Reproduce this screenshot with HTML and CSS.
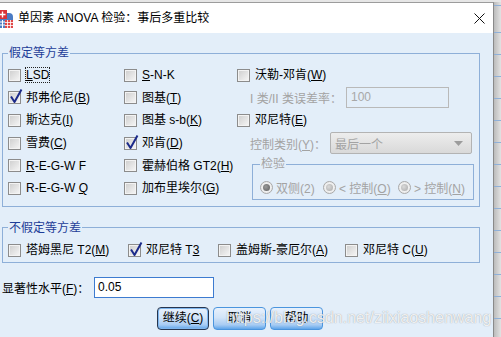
FILE: index.html
```html
<!DOCTYPE html>
<html lang="zh-CN">
<head>
    <meta charset="UTF-8">
    <title>单因素 ANOVA 检验：事后多重比较</title>
    <link rel="stylesheet" href="styles.css">
</head>
<body>
<div class="screen">
    <div class="dialog">
        <div class="titlebar">
            <svg class="appIcon" viewBox="0 0 14 20">
                <rect x="-4" y="5" width="17" height="16" rx="4" fill="#4c7cc4"/>
                <path d="M0 14h5M0 17h5M2.5 12v9" stroke="#fff" stroke-width="1"/>
                <rect x="5" y="12" width="8" height="8" fill="#e04848"/>
                <path d="M5 14.5h8M5 17.5h8M7.5 12v8M10.5 12v8" stroke="#fff" stroke-width="0.8"/>
                <rect x="-2" y="2" width="9" height="9" fill="#d9343a"/>
                <path d="M2.5 3.5v6M-0.5 6.5h6" stroke="#fff" stroke-width="1.4"/>
            </svg>
            <span class="title">单因素 ANOVA 检验：事后多重比较</span>
            <svg class="closeIcon" viewBox="0 0 11 11">
                <path d="M0.5 0.5L10.5 10.5M10.5 0.5L0.5 10.5" stroke="#111" stroke-width="1"/>
            </svg>
        </div>

        <div class="content">
            <fieldset class="group equalGroup">
                <legend>假定等方差</legend>
                <div class="cols">
                    <div class="col col1">
                        <div class="row"><label class="check"><span class="box"></span><span class="focusText"><u>L</u>SD</span></label></div>
                        <div class="row"><label class="check"><span class="box"><svg viewBox="0 0 15 16"><path d="M3 8.5L6.5 14L13.5 1.5"/></svg></span><span>邦弗伦尼(<u>B</u>)</span></label></div>
                        <div class="row"><label class="check"><span class="box"></span><span>斯达克(<u>I</u>)</span></label></div>
                        <div class="row"><label class="check"><span class="box"></span><span>雪费(<u>C</u>)</span></label></div>
                        <div class="row"><label class="check"><span class="box"></span><span><u>R</u>-E-G-W F</span></label></div>
                        <div class="row"><label class="check"><span class="box"></span><span>R-E-G-W <u>Q</u></span></label></div>
                    </div>
                    <div class="col col2">
                        <div class="row"><label class="check"><span class="box"></span><span><u>S</u>-N-K</span></label></div>
                        <div class="row"><label class="check"><span class="box"></span><span>图基(<u>T</u>)</span></label></div>
                        <div class="row"><label class="check"><span class="box"></span><span>图基 s-b(<u>K</u>)</span></label></div>
                        <div class="row"><label class="check"><span class="box"><svg viewBox="0 0 15 16"><path d="M3 8.5L6.5 14L13.5 1.5"/></svg></span><span>邓肯(<u>D</u>)</span></label></div>
                        <div class="row"><label class="check"><span class="box"></span><span>霍赫伯格 GT2(<u>H</u>)</span></label></div>
                        <div class="row"><label class="check"><span class="box"></span><span>加布里埃尔(<u>G</u>)</span></label></div>
                    </div>
                    <div class="col col3">
                        <div class="row"><label class="check"><span class="box"></span><span>沃勒-邓肯(<u>W</u>)</span></label></div>
                        <div class="row field">
                            <span class="rateLabel">I 类/II 类误差率：</span>
                            <span class="inputDisabled">100</span>
                        </div>
                        <div class="row"><label class="check"><span class="box"></span><span>邓尼特(<u>E</u>)</span></label></div>
                        <div class="row field">
                            <span class="ctrlLabel">控制类别(<u>Y</u>)：</span>
                            <span class="selectDisabled"><span>最后一个</span><svg viewBox="0 0 9 5"><path d="M0 0h9L4.5 5z"/></svg></span>
                        </div>
                        <fieldset class="group testBox">
                            <legend>检验</legend>
                            <div class="radios">
                                <label class="radioItem r1"><span class="radio on"></span><span>双侧(2)</span></label>
                                <label class="radioItem r2"><span class="radio"></span><span>&lt; 控制(<u>O</u>)</span></label>
                                <label class="radioItem"><span class="radio"></span><span>&gt; 控制(<u>N</u>)</span></label>
                            </div>
                        </fieldset>
                    </div>
                </div>
            </fieldset>

            <fieldset class="group unequalGroup">
                <legend>不假定等方差</legend>
                <div class="row">
                    <label class="check u1"><span class="box"></span><span>塔姆黑尼 T2(<u>M</u>)</span></label>
                    <label class="check u2"><span class="box"><svg viewBox="0 0 15 16"><path d="M3 8.5L6.5 14L13.5 1.5"/></svg></span><span>邓尼特 T<u>3</u></span></label>
                    <label class="check u3"><span class="box"></span><span>盖姆斯-豪厄尔(<u>A</u>)</span></label>
                    <label class="check"><span class="box"></span><span>邓尼特 C(<u>U</u>)</span></label>
                </div>
            </fieldset>

            <div class="sigRow">
                <span class="sigLabel">显著性水平(<u>F</u>)：</span>
                <span class="sigInput">0.05</span>
            </div>

            <div class="buttons">
                <button class="btn btnDefault">继续(<u>C</u>)</button>
                <button class="btn">取消</button>
                <button class="btn">帮助</button>
            </div>
        </div>
    </div>
    <div class="strip"></div>

    <div class="watermark">https://blog.csdn.net/ziixiaoshenwang</div>
</div>
</body>
</html>
```

FILE: styles.css
```css
* {
    box-sizing: border-box;
}

body {
    margin: 0;
    background-color: #e6e6e6;
    color: #000000;
    font-family: "Liberation Sans", "Noto Sans CJK SC", sans-serif;
    font-size: 12px;
    overflow: hidden;
}

.screen {
    position: relative;
    display: flex;
    height: 337px;
    padding-top: 2px;
}

.dialog {
    width: 494px;
    flex: none;
    display: flex;
    flex-direction: column;
    background-color: #e3eef9;
    border-top: 1px solid #9c9c9c;
    border-right: 1px solid #8a8a8a;
}

.titlebar {
    height: 30px;
    display: flex;
    align-items: center;
    background-color: #ffffff;
}

.appIcon {
    width: 14px;
    height: 20px;
    margin-right: 4px;
}

.title {
    flex: 1;
    line-height: 14px;
}

.closeIcon {
    width: 11px;
    height: 11px;
    margin-right: 8px;
}

.content {
    padding: 13px 13px 0 2px;
}

/* group boxes */
.group {
    margin: 0;
    min-width: 0;
    border: 1px solid #8eafd8;
}

.group legend {
    padding: 0 1px;
    line-height: 14px;
    color: #1e3d98;
}

.equalGroup {
    padding: 4px 0 6px 5px;
}

.cols {
    display: flex;
}

.col1 {
    width: 116px;
}

.col2 {
    width: 113px;
}

.col3 {
    flex: 1;
}

.row {
    height: 22.6px;
    display: flex;
    align-items: center;
}

.check {
    display: flex;
    align-items: center;
    gap: 5px;
    white-space: nowrap;
    line-height: 14px;
}

.box {
    position: relative;
    flex: none;
    width: 13px;
    height: 13px;
    border: 1px solid #8c8c8c;
    background: linear-gradient(135deg, #cdcdcd, #f7f7f7);
    box-shadow: inset 0 0 0 1px #f3f3f3;
}

.box svg {
    position: absolute;
    left: -1px;
    top: -4px;
    width: 15px;
    height: 16px;
    overflow: visible;
}

.box svg path {
    fill: none;
    stroke: #1b2a8a;
    stroke-width: 2;
    stroke-linejoin: round;
}

.focusText {
    outline: 1px dotted #222222;
}

/* disabled fields on the right */
.field {
    padding-left: 13px;
    color: #a3a3a3;
    white-space: nowrap;
}

.rateLabel {
    width: 96px;
}

.ctrlLabel {
    width: 80px;
}

.inputDisabled {
    width: 103px;
    height: 21px;
    padding-left: 4px;
    line-height: 19px;
    border: 1px solid #b9b9b9;
    color: #a8a8a8;
}

.selectDisabled {
    width: 142px;
    height: 22px;
    display: flex;
    align-items: center;
    justify-content: space-between;
    padding: 0 8px 0 4px;
    border: 1px solid #b3b3b3;
    border-radius: 2px;
    background: linear-gradient(#ededed, #d9d9d9);
    color: #a3a3a3;
}

.selectDisabled svg {
    width: 9px;
    height: 5px;
    fill: #9c9c9c;
}

.testBox {
    width: 222px;
    margin: 3px 0 0 15px;
    padding: 5px 0 0 7px;
}

.testBox legend {
    color: #a3a3a3;
}

.radios {
    height: 22.6px;
    display: flex;
    align-items: center;
    color: #a3a3a3;
    white-space: nowrap;
}

.radioItem {
    display: flex;
    align-items: center;
    gap: 3px;
}

.r1 {
    width: 63px;
}

.r2 {
    width: 75px;
}

.radio {
    width: 13px;
    height: 13px;
    display: flex;
    align-items: center;
    justify-content: center;
    border: 1px solid #a9a9a9;
    border-radius: 50%;
    background: radial-gradient(circle, #ffffff, #e2e2e2);
}

.radio::after {
    content: "";
    width: 7px;
    height: 7px;
    border-radius: 50%;
    background: radial-gradient(circle at 40% 40%, #dadada, #a9a9a9);
}

.radio.on::after {
    background: radial-gradient(circle at 40% 40%, #9a9a9a, #5e5e5e);
}

/* second group */
.unequalGroup {
    margin-top: 14px;
    padding: 4px 0 0 5px;
}

.u1 {
    width: 120px;
}

.u2 {
    width: 90px;
}

.u3 {
    width: 127px;
}

.sigRow {
    height: 21px;
    margin-top: 14px;
    display: flex;
    align-items: center;
}

.sigLabel {
    width: 92px;
    white-space: nowrap;
}

.sigInput {
    width: 120px;
    height: 21px;
    padding-left: 3px;
    line-height: 19px;
    border: 1px solid #3d7bd0;
    background-color: #ffffff;
}

.buttons {
    display: flex;
    gap: 4px;
    margin-top: 9px;
    padding-left: 155px;
}

.btn {
    width: 53px;
    height: 23px;
    padding: 0;
    text-align: center;
    line-height: 21px;
    font-family: inherit;
    font-size: 12px;
    color: #000000;
    border: 1px solid #4b95de;
    border-radius: 4px;
    background: linear-gradient(#e8f1fc 0%, #d2e4f8 45%, #a8ccf3 80%, #5fa5ea 100%);
}

.btnDefault {
    width: 52px;
    border-color: #27364f;
    box-shadow: inset 0 0 0 1px #7fb6ee;
}

.strip {
    flex: 1;
    background:
        repeating-linear-gradient(to bottom, transparent 0, transparent 21px, #8fb0d8 21px, #8fb0d8 22px),
        linear-gradient(to right, #bcbcbc, #e2e2e2);
    background-position: 0 9px, 0 0;
}

.watermark {
    position: absolute;
    left: 226px;
    top: 309px;
    font-family: "Liberation Sans", sans-serif;
    font-size: 16px;
    line-height: 18px;
    white-space: nowrap;
    color: rgba(255, 255, 255, 0.85);
    text-shadow: 0 0 1px rgba(60, 60, 60, 0.5);
    pointer-events: none;
}
```
